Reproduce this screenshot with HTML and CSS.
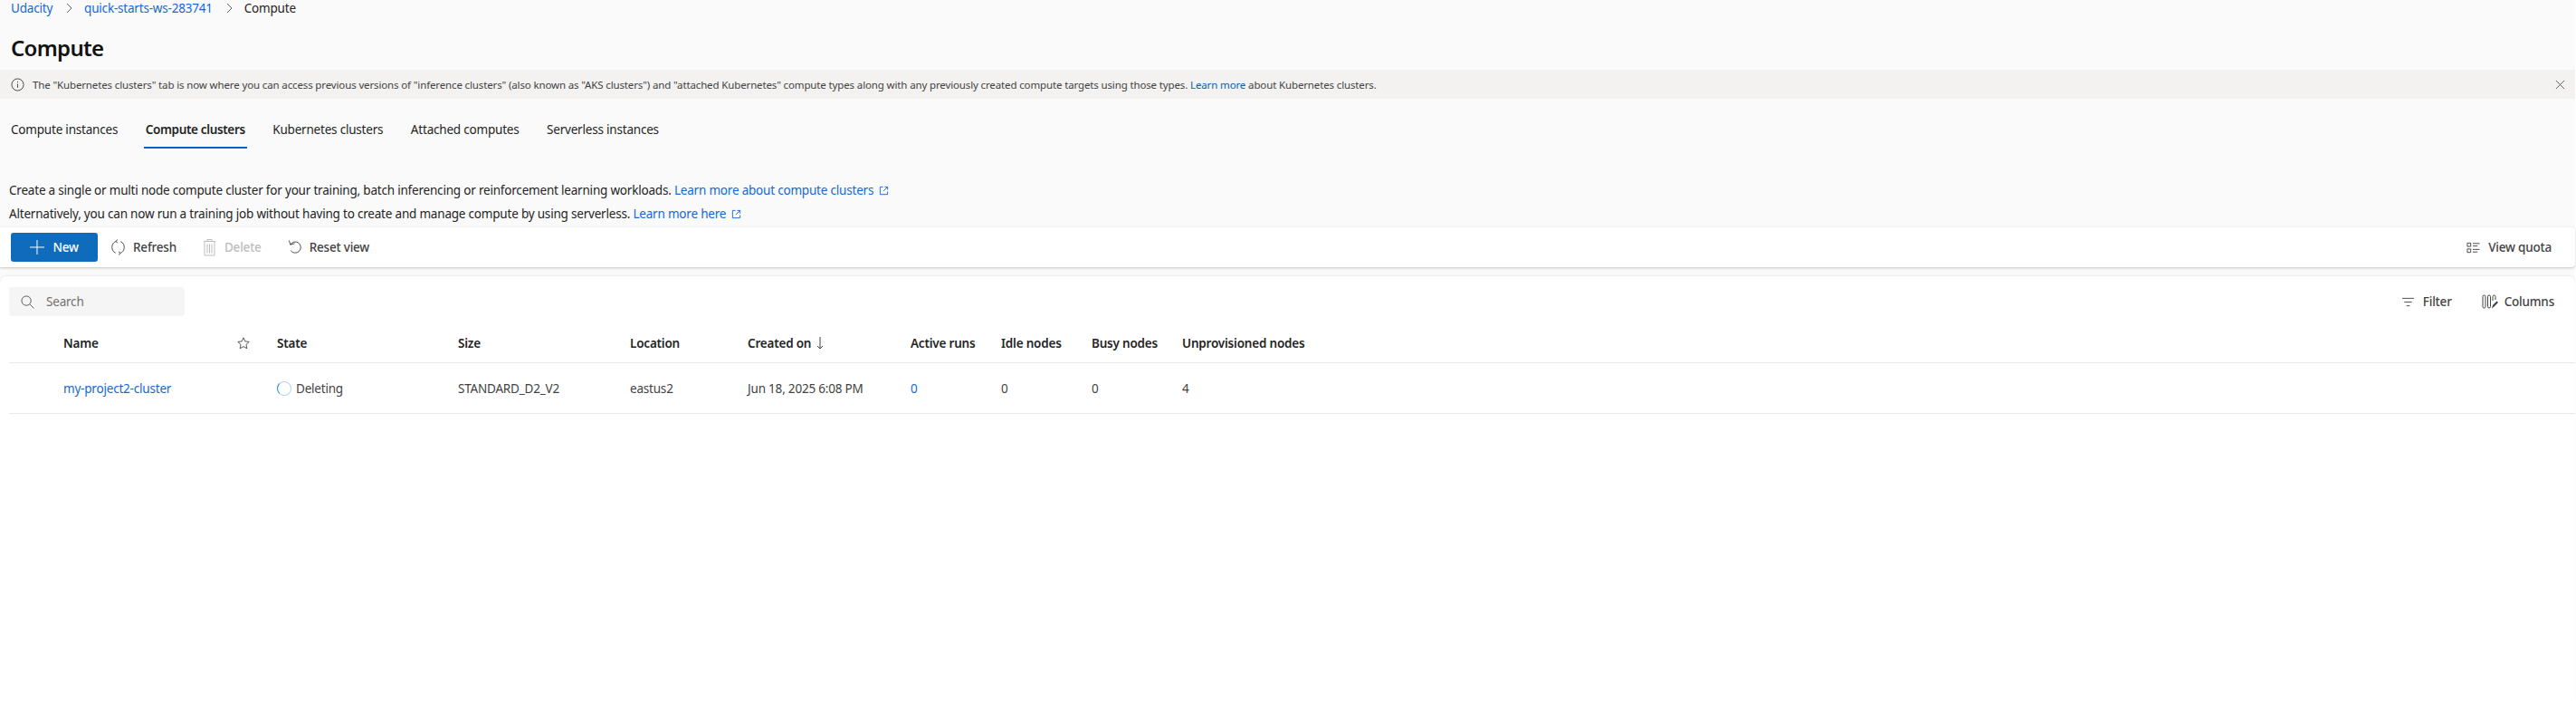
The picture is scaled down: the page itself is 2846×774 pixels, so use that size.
FILE: index.html
```html
<!DOCTYPE html>
<html lang="en">
<head>
    <meta charset="UTF-8">
    <title>Compute</title>
    <link rel="stylesheet" href="styles.css">
</head>
<body>
    <div class="page">
        <nav class="breadcrumbs">
            <a href="#" class="crumb-udacity">Udacity</a>
            <svg class="chevron" viewBox="0 0 8 12"><path d="M2 1l5 5-5 5"/></svg>
            <a href="#" class="crumb-workspace">quick-starts-ws-283741</a>
            <svg class="chevron" viewBox="0 0 8 12"><path d="M2 1l5 5-5 5"/></svg>
            <span>Compute</span>
        </nav>

        <h1 class="title">Compute</h1>

        <div class="banner">
            <svg class="banner-icon" viewBox="0 0 16 16"><circle cx="8" cy="8" r="7"/><path d="M8 7v4.5M8 4.2v1.2"/></svg>
            <p class="banner-text">The "Kubernetes clusters" tab is now where you can access previous versions of "inference clusters" (also known as "AKS clusters") and "attached Kubernetes" compute types along with any previously created compute targets using those types. <a href="#">Learn more</a> about Kubernetes clusters.</p>
            <svg class="banner-close" viewBox="0 0 12 12"><path d="M1 1l10 10M11 1L1 11"/></svg>
        </div>

        <div class="tabs">
            <a href="#" class="tab">Compute instances</a>
            <a href="#" class="tab tab-active">Compute clusters</a>
            <a href="#" class="tab">Kubernetes clusters</a>
            <a href="#" class="tab">Attached computes</a>
            <a href="#" class="tab">Serverless instances</a>
        </div>

        <div class="intro">
            <p>Create a single or multi node compute cluster for your training, batch inferencing or reinforcement learning workloads. <a href="#">Learn more about compute clusters<svg class="external" viewBox="0 0 12 12"><path d="M5 1.5H1.5v9h9V7M7 1.5h3.5V5M10.5 1.5L5.5 6.5"/></svg></a></p>
            <p>Alternatively, you can now run a training job without having to create and manage compute by using serverless. <a href="#">Learn more here<svg class="external" viewBox="0 0 12 12"><path d="M5 1.5H1.5v9h9V7M7 1.5h3.5V5M10.5 1.5L5.5 6.5"/></svg></a></p>
        </div>

        <div class="toolbar">
            <button class="btn-new">
                <svg viewBox="0 0 16 16"><path d="M8 0v16M0 8h16"/></svg>
                New
            </button>
            <button class="btn btn-refresh">
                <svg viewBox="0 0 16 20"><path d="M5.5 3A7.5 7.5 0 0 0 5 16.7M10.5 17A7.5 7.5 0 0 0 11 3.3M7.5 1L5.3 3l2.2 2M8.500 15l2.200 2-2.200 2"/></svg>
                Refresh
            </button>
            <button class="btn btn-delete">
                <svg viewBox="0 0 14 20"><path d="M.5 3.500h13M4.500 3.500V1.500h5v2M1.500 3.500v15.500h11V3.500M4.500 6.500v10M7 6.500v10M9.500 6.500v10"/></svg>
                Delete
            </button>
            <button class="btn btn-reset">
                <svg viewBox="0 0 16 18"><path d="M1.500 1l1.500 5 5-1.500M3 6A6.500 6.500 0 1 1 3.500 13"/></svg>
                Reset view
            </button>
            <button class="btn btn-quota">
                <svg viewBox="0 0 16 16"><path d="M1 2.500h4v4H1zM1 9.500h4v4H1zM7.500 3h8M7.500 6h5.500M7.500 10h8M7.500 13h5.500"/></svg>
                View quota
            </button>
        </div>

        <section class="list">
            <div class="list-bar">
                <label class="search">
                    <svg viewBox="0 0 16 16"><circle cx="6.500" cy="6.500" r="5.500"/><path d="M10.500 10.500l5 5"/></svg>
                    <span>Search</span>
                </label>
                <button class="btn btn-filter">
                    <svg viewBox="0 0 16 12"><path d="M1 1.500h14M3.500 6h9M6 10.500h4"/></svg>
                    Filter
                </button>
                <button class="btn btn-columns">
                    <svg viewBox="0 0 18 16"><path d="M1 2.500a1.500 1.500 0 0 1 3 0v11a1.500 1.500 0 0 1-3 0zM6.500 2.500a1.500 1.500 0 0 1 3 0v11a1.500 1.500 0 0 1-3 0zM12 7V2.500a1.500 1.500 0 0 1 3 0V6"/><path class="pencil" d="M11 15.500l1-3.500 4.500-4.500 1.500 1.500-4.500 4.500z"/></svg>
                    Columns
                </button>
            </div>

            <div class="row row-head">
                <div class="cell-name">
                    Name
                    <svg class="star" viewBox="0 0 16 16"><path d="M8 1l2.100 4.600 5 .6-3.700 3.400 1 5L8 12.100 3.600 14.600l1-5L.9 6.200l5-.6z"/></svg>
                </div>
                <div>State</div>
                <div>Size</div>
                <div>Location</div>
                <div class="cell-created">
                    Created on
                    <svg class="sort" viewBox="0 0 8 14"><path d="M4 0v13M1 10l3 3 3-3"/></svg>
                </div>
                <div>Active runs</div>
                <div>Idle nodes</div>
                <div>Busy nodes</div>
                <div>Unprovisioned nodes</div>
            </div>

            <div class="row row-data">
                <div><a href="#">my-project2-cluster</a></div>
                <div class="cell-state"><span class="spinner"></span>Deleting</div>
                <div>STANDARD_D2_V2</div>
                <div>eastus2</div>
                <div>Jun 18, 2025 6:08 PM</div>
                <div><a href="#">0</a></div>
                <div>0</div>
                <div>0</div>
                <div>4</div>
            </div>
        </section>
    </div>
</body>
</html>
```

FILE: styles.css
```css
* {
    box-sizing: border-box;
}
html, body {
    margin: 0;
    background-color: white;
}
body {
    font-family: "Noto Sans", "Open Sans", Arial, sans-serif;
    font-size: 13.5px;
    letter-spacing: -0.2px;
    color: #242424;
}
a {
    color: #1468d6;
    text-decoration: none;
}
p {
    margin: 0;
}
svg {
    fill: none;
    stroke: currentColor;
    stroke-width: 1;
    flex: none;
}
button {
    font: inherit;
    letter-spacing: inherit;
    border: 0;
    background: none;
    padding: 0;
    display: flex;
    align-items: center;
}

.page {
    width: 2845px;
    min-height: 774px;
    background-color: #fafafa;
    display: flex;
    flex-direction: column;
}

/* top of the page */
.breadcrumbs {
    height: 18px;
    padding-left: 12px;
    display: flex;
    align-items: center;
    line-height: 18px;
}
.chevron {
    width: 8px;
    height: 12px;
    margin: 0 13px 0 14px;
    color: #616161;
}
.title {
    margin: 19px 0 8px 12px;
    font-size: 24px;
    line-height: 32px;
    font-weight: 600;
    letter-spacing: -0.7px;
    color: #111;
}
.banner {
    height: 32px;
    background-color: #f3f2f1;
    display: flex;
    align-items: center;
    padding-left: 12px;
    font-size: 11.5px;
    letter-spacing: -0.135px;
    color: #424242;
}
.banner-icon {
    width: 15px;
    height: 15px;
    margin-right: 9px;
}
.banner-text {
    flex: 1;
}
.banner-text a {
    color: #115ea3;
}
.banner-close {
    width: 11px;
    height: 11px;
    margin-right: 11px;
    color: #555;
}

.tabs {
    display: flex;
    height: 55px;
    padding-left: 12px;
    padding-top: 24px;
    gap: 30.5px;
}
.tab {
    color: #242424;
    height: 31px;
    line-height: 20px;
}
.tab-active {
    font-weight: 600;
    letter-spacing: -0.35px;
    border-bottom: 2px solid #0f5fc9;
    margin: 0 -2px;
    padding: 0 2px;
}

.intro {
    margin-top: 33px;
    padding-left: 10px;
    line-height: 26px;
    height: 54px;
}
.external {
    width: 11px;
    height: 11px;
    margin-left: 6px;
    vertical-align: -1px;
}

/* command bar */
.toolbar {
    height: 44px;
    background-color: white;
    border-radius: 0 4px 4px 0;
    box-shadow: 0 1px 3px rgba(0, 0, 0, 0.22);
    display: flex;
    align-items: center;
    padding-left: 12px;
    padding-right: 26px;
}
.btn {
    color: #424242;
    font-weight: 500;
    gap: 9px;
}
.btn svg {
    width: 15px;
    height: 15px;
}
.btn-new {
    width: 96px;
    height: 32px;
    background-color: #0f6cbd;
    border-radius: 3px;
    color: white;
    font-weight: 500;
    justify-content: center;
    gap: 9px;
}
.btn-new svg {
    width: 16px;
    height: 16px;
}
.btn-refresh {
    margin-left: 15px;
}
.btn-refresh svg, .btn-delete svg, .btn-reset svg {
    height: 20px;
}
.btn-delete {
    margin-left: 29px;
    color: #bdbdbd;
}
.btn-reset {
    margin-left: 29px;
}
.btn-quota {
    margin-left: auto;
}

/* list */
.list {
    flex: 1;
    margin-top: 10px;
    background-color: white;
    border-radius: 8px 8px 0 0;
    box-shadow: 0 -1px 2px rgba(0, 0, 0, 0.06);
    padding: 12px 0 0 10px;
}
.list-bar {
    display: flex;
    align-items: center;
    height: 32px;
    padding-right: 23px;
}
.search {
    width: 194px;
    height: 32px;
    background-color: #f5f5f5;
    border-radius: 4px;
    display: flex;
    align-items: center;
    gap: 13px;
    padding-left: 13px;
    color: #707070;
}
.search svg {
    width: 15px;
    height: 15px;
    color: #555;
}
.btn-filter {
    margin-left: auto;
}
.btn-filter svg {
    height: 11px;
}
.btn-columns {
    margin-left: 33px;
    gap: 7px;
}
.btn-columns svg {
    width: 18px;
    height: 16px;
}
.pencil {
    fill: #424242;
    stroke: none;
}

.row {
    display: grid;
    grid-template-columns: 236px 200px 190px 130px 180px 100px 100px 100px 1fr;
    padding-left: 60px;
    align-items: center;
    border-bottom: 1px solid #eaeaea;
}
.row-head {
    margin-top: 13px;
    height: 39px;
    padding-bottom: 4px;
    font-weight: 600;
    color: #242424;
}
.row-data {
    height: 56px;
    padding-top: 1px;
    color: #424242;
}
.cell-name {
    display: flex;
    justify-content: space-between;
    align-items: center;
    padding-right: 30px;
}
.star {
    width: 14px;
    height: 14px;
    color: #424242;
}
.cell-created {
    display: flex;
    align-items: center;
    gap: 6px;
}
.sort {
    width: 8px;
    height: 14px;
    color: #424242;
}
.cell-state {
    display: flex;
    align-items: center;
    gap: 5px;
}
.spinner {
    width: 16px;
    height: 16px;
    border-radius: 50%;
    border: 1.5px solid #b4d3f2;
    border-left-color: #2b7cd3;
}
```
